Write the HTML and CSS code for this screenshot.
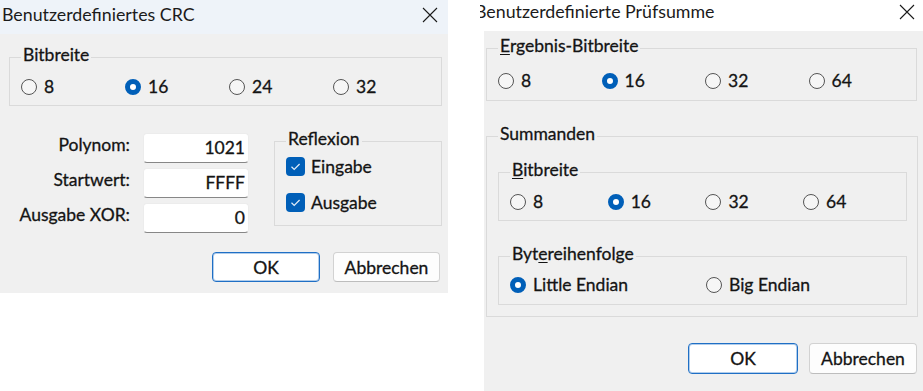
FILE: index.html
```html
<!DOCTYPE html>
<html lang="de">
<head>
<meta charset="utf-8">
<title>Dialoge</title>
<link rel="stylesheet" href="styles.css">
</head>
<body>
<div class="screen">
  <section class="dlg dlg-crc">
    <header class="titlebar tb-crc">
      <span class="title">Benutzerdefiniertes CRC</span>
      <svg class="close" width="16" height="16" viewBox="0 0 16 16"><path d="M1 1 L15 15 M15 1 L1 15" stroke="#1a1a1a" stroke-width="1.1" fill="none"/></svg>
    </header>
    <div class="dlg-body crc-body">
      <fieldset class="group g-bits">
        <legend>Bitbreite</legend>
        <div class="radios r104">
          <label class="radio"><span class="rb"></span>8</label>
          <label class="radio"><span class="rb on"></span>16</label>
          <label class="radio"><span class="rb"></span>24</label>
          <label class="radio"><span class="rb"></span>32</label>
        </div>
      </fieldset>
      <div class="crc-form">
        <div class="fields">
          <span class="flabel">Polynom:</span><div class="input">1021</div>
          <span class="flabel">Startwert:</span><div class="input">FFFF</div>
          <span class="flabel">Ausgabe XOR:</span><div class="input">0</div>
        </div>
        <fieldset class="group g-refl">
          <legend>Reflexion</legend>
          <div class="check"><span class="cb"><svg width="19" height="19" viewBox="0 0 19 19"><path d="M5.5 9.8 L8.2 12.4 L13.6 7" stroke="#e3eef9" stroke-width="1.2" fill="none"/></svg></span>Eingabe</div>
          <div class="check"><span class="cb"><svg width="19" height="19" viewBox="0 0 19 19"><path d="M5.5 9.8 L8.2 12.4 L13.6 7" stroke="#e3eef9" stroke-width="1.2" fill="none"/></svg></span>Ausgabe</div>
        </fieldset>
      </div>
      <div class="buttons crc-buttons">
        <button class="btn btn-default">OK</button>
        <button class="btn">Abbrechen</button>
      </div>
    </div>
  </section>

  <section class="dlg dlg-sum">
    <header class="titlebar tb-sum">
      <span class="title">Benutzerdefinierte Prüfsumme</span>
      <svg class="close" width="16" height="16" viewBox="0 0 16 16"><path d="M1 1 L15 15 M15 1 L1 15" stroke="#1a1a1a" stroke-width="1.1" fill="none"/></svg>
    </header>
    <div class="dlg-body sum-body">
      <fieldset class="group g-res">
        <legend><u>E</u>rgebnis-Bitbreite</legend>
        <div class="radios r103">
          <label class="radio"><span class="rb"></span>8</label>
          <label class="radio"><span class="rb on"></span>16</label>
          <label class="radio"><span class="rb"></span>32</label>
          <label class="radio"><span class="rb"></span>64</label>
        </div>
      </fieldset>
      <fieldset class="group g-summ">
        <legend>Summanden</legend>
        <fieldset class="group g-inner">
          <legend><u>B</u>itbreite</legend>
          <div class="radios r98">
            <label class="radio"><span class="rb"></span>8</label>
            <label class="radio"><span class="rb on"></span>16</label>
            <label class="radio"><span class="rb"></span>32</label>
            <label class="radio"><span class="rb"></span>64</label>
          </div>
        </fieldset>
        <fieldset class="group g-order">
          <legend>Byt<u>e</u>reihenfolge</legend>
          <div class="radios r196">
            <label class="radio"><span class="rb on"></span>Little Endian</label>
            <label class="radio"><span class="rb"></span>Big Endian</label>
          </div>
        </fieldset>
      </fieldset>
      <div class="buttons sum-buttons">
        <button class="btn btn-default">OK</button>
        <button class="btn">Abbrechen</button>
      </div>
    </div>
  </section>
</div>
</body>
</html>
```

FILE: styles.css
```css
html, body {
  margin: 0;
  background: #ffffff;
}
body {
  font-family: Lato, "Open Sans", sans-serif;
  font-size: 17.5px;
  color: #1b1b1b;
}
.screen {
  display: flex;
  align-items: flex-start;
  width: 923px;
  height: 391px;
  overflow: hidden;
}
.dlg {
  flex: none;
  display: flex;
  flex-direction: column;
}
.dlg-crc {
  width: 448px;
}
.dlg-sum {
  width: 443px;
  height: 391px;
  margin-left: 32px;
  overflow: hidden;
}
.titlebar {
  display: flex;
  justify-content: space-between;
  align-items: flex-start;
}
.title {
  line-height: 20px;
  white-space: nowrap;
  font-size: 17.8px;
}
.tb-crc {
  height: 34px;
  background: #eef3f9;
}
.tb-crc .title {
  padding: 4px 0 0 2px;
}
.tb-crc .close {
  margin: 7px 10px 0 0;
}
.tb-sum {
  height: 31px;
  background: #ffffff;
}
.tb-sum .title {
  margin-left: -5px;
  padding-top: 1px;
}
.tb-sum .close {
  margin: 4px 8px 0 0;
}
.dlg-body {
  background: #f0f0f0;
  box-sizing: border-box;
  display: flex;
  flex-direction: column;
  color: #141414;
  -webkit-text-stroke: 0.3px #141414;
}
.crc-body {
  height: 259px;
  padding-top: 11px;
}
.sum-body {
  flex: 1;
  margin-left: 4px;
  padding-top: 5px;
}

/* group boxes */
.group {
  margin: 0;
  padding: 0 11px;
  border: 1px solid #dadada;
  min-width: 0;
}
.group legend {
  padding: 0 2px 4px;
  line-height: 20px;
}
.group legend u {
  text-decoration-thickness: 1px;
  text-underline-offset: 2px;
}

/* radios */
.radios {
  display: flex;
}
.radio {
  display: flex;
  align-items: center;
  gap: 7px;
  line-height: 20px;
  white-space: nowrap;
}
.r104 .radio { flex: 0 0 104px; }
.r103 .radio { flex: 0 0 103.5px; }
.r98 .radio { flex: 0 0 97.7px; }
.r196 .radio { flex: 0 0 196px; }
.rb {
  flex: none;
  width: 16px;
  height: 16px;
  box-sizing: border-box;
  border-radius: 50%;
  border: 1px solid #555555;
  background: #f6f6f6;
}
.rb.on {
  border: 5px solid #005fb8;
  background: #ffffff;
}

/* left dialog */
.g-bits {
  margin: 0 6px 0 9px;
  padding-top: 8px;
  padding-bottom: 8px;
}
.crc-form {
  display: flex;
  align-items: flex-start;
  margin-top: 23px;
}
.fields {
  display: grid;
  grid-template-columns: 122px 106px;
  grid-auto-rows: 30px;
  column-gap: 13px;
  row-gap: 5px;
  margin: 4px 0 0 8px;
}
.flabel {
  text-align: right;
  line-height: 20px;
  padding-top: 2px;
  white-space: nowrap;
}
.input {
  background: #ffffff;
  border: 1px solid #ececec;
  border-bottom-color: #878787;
  border-radius: 4px;
  box-sizing: border-box;
  text-align: right;
  padding-right: 3px;
  line-height: 28px;
}
.g-refl {
  width: 168px;
  box-sizing: border-box;
  margin-left: 25px;
  padding-bottom: 10px;
}
.check {
  display: flex;
  align-items: center;
  gap: 6px;
  height: 26px;
}
.check + .check {
  margin-top: 10px;
}
.cb {
  flex: none;
  width: 19px;
  height: 19px;
  border-radius: 4px;
  background: #005fb8;
  display: flex;
  -webkit-text-stroke: 0;
}

/* buttons */
.buttons {
  display: flex;
  justify-content: flex-end;
}
.btn {
  font: inherit;
  color: inherit;
  -webkit-text-stroke: inherit;
  padding: 0;
  background: #fdfdfd;
  border: 1px solid #d2d2d2;
  border-bottom-color: #bdbdbd;
  border-radius: 4px;
}
.btn-default {
  background: #ffffff;
  border-color: #1f6fc5;
  box-shadow: inset 0 0 0 1px rgba(31, 111, 197, 0.35);
}
.crc-buttons {
  margin-top: 19px;
  padding-right: 8px;
  gap: 13px;
}
.crc-buttons .btn {
  height: 30px;
  width: 107px;
}
.crc-buttons .btn-default {
  width: 108px;
}
.sum-buttons {
  margin-top: 26px;
  padding-right: 6px;
  gap: 11px;
}
.sum-buttons .btn {
  height: 31px;
  width: 108px;
}
.sum-buttons .btn-default {
  width: 110px;
}

/* right dialog groups */
.g-res {
  margin: 0 6px 0 2px;
  padding-top: 11px;
  padding-bottom: 9px;
}
.g-summ {
  margin: 23px 5px 0 2px;
  padding: 12px 10px 11px 11px;
}
.g-inner {
  padding-top: 8px;
  padding-bottom: 8px;
}
.g-order {
  margin-top: 23px;
  padding-top: 7px;
  padding-bottom: 9px;
}
```
